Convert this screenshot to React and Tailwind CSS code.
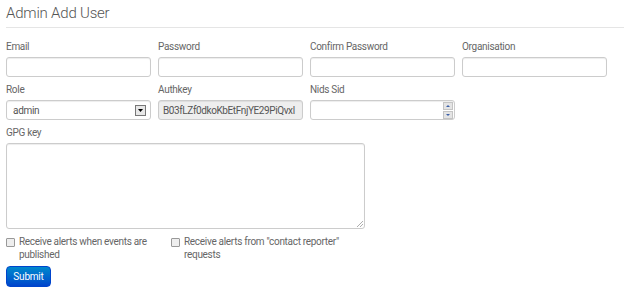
import React from 'react';

const font = { fontFamily: 'Roboto, "Open Sans", sans-serif' };

const Field = ({ label, children, className = '' }) => (
  <div className={`flex flex-col w-[145px] ${className}`}>
    <label className="h-[16px] pt-[2px] leading-[14px] mb-[3px] text-[10px] tracking-[-0.3px] text-[#666]">{label}</label>
    {children}
  </div>
);

const inputCls = 'h-[20px] w-full rounded-[3px] border border-[#cccccc] bg-white shadow-[inset_0_1px_1px_rgba(0,0,0,0.075)]';

function App() {
  return (
    <div className="w-[624px] h-[298px] bg-white overflow-hidden text-[#666]" style={font}>
      <div className="pl-[6px] pt-[3px]">
        <h1 className="text-[15px] font-light leading-[20px] text-[#555] h-[24px] tracking-[-0.2px]">Admin Add User</h1>
      </div>
      <div className="ml-[6px] border-t border-[#e5e5e5]" />

      <div className="pl-[6px] pt-[10px]">
        <div className="flex gap-[7px]">
          <Field label="Email"><div className={inputCls} /></Field>
          <Field label="Password"><div className={inputCls} /></Field>
          <Field label="Confirm Password"><div className={inputCls} /></Field>
          <Field label="Organisation"><div className={inputCls} /></Field>
        </div>

        <div className="flex gap-[7px] mt-[4px]">
          <Field label="Role">
            <div className={`${inputCls} flex items-center justify-between pl-[6px] pr-[4px]`}>
              <span className="text-[10px] tracking-[-0.3px] text-[#555]">admin</span>
              <span className="w-[11px] h-[11px] border border-[#777] bg-[#e8e8e8] flex items-center justify-center">
                <svg width="5" height="3" viewBox="0 0 5 3"><path d="M0 0h5L2.5 3z" fill="#000" /></svg>
              </span>
            </div>
          </Field>
          <Field label="Authkey">
            <div className={`${inputCls} !bg-[#eeeeee] flex items-center px-[4px] overflow-hidden`}>
              <span className="text-[10px] tracking-[-0.4px] text-[#555] whitespace-nowrap">B03fLZf0dkoKbEtFnjYE29PiQvxl</span>
            </div>
          </Field>
          <Field label="Nids Sid">
            <div className={`${inputCls} flex items-center justify-end pr-[1px]`}>
              <div className="flex flex-col gap-[1px]">
                <span className="w-[10px] h-[8px] bg-[#e4e4e4] border border-[#c4c4c4] flex items-center justify-center">
                  <svg width="4" height="2" viewBox="0 0 4 2"><path d="M0 2h4L2 0z" fill="#3a5fa8" /></svg>
                </span>
                <span className="w-[10px] h-[8px] bg-[#e4e4e4] border border-[#c4c4c4] flex items-center justify-center">
                  <svg width="4" height="2" viewBox="0 0 4 2"><path d="M0 0h4L2 2z" fill="#3a5fa8" /></svg>
                </span>
              </div>
            </div>
          </Field>
        </div>

        <div className="flex flex-col mt-[4px]">
          <label className="h-[16px] pt-[2px] leading-[14px] mb-[3px] text-[10px] tracking-[-0.3px] text-[#666]">GPG key</label>
          <div className="relative w-[359px] h-[86px] rounded-[3px] border border-[#cccccc] bg-white shadow-[inset_0_1px_1px_rgba(0,0,0,0.075)]">
            <svg className="absolute right-[1px] bottom-[1px]" width="6" height="6" viewBox="0 0 6 6">
              <path d="M6 0L0 6M6 3L3 6" stroke="#999" strokeWidth="0.8" />
            </svg>
          </div>
        </div>

        <div className="flex mt-[6px] text-[10px] leading-[13px] tracking-[-0.3px] text-[#666]">
          <div className="flex w-[165px]">
            <span className="mt-[3px] w-[9px] h-[9px] border border-[#999] bg-[#eee] rounded-[1px] shrink-0" />
            <div className="ml-[4px]">
              <div>Receive alerts when events are</div>
              <div>published</div>
            </div>
          </div>
          <div className="flex">
            <span className="mt-[3px] w-[9px] h-[9px] border border-[#999] bg-[#eee] rounded-[1px] shrink-0" />
            <div className="ml-[4px]">
              <div>Receive alerts from "contact reporter"</div>
              <div>requests</div>
            </div>
          </div>
        </div>

        <button className="mt-[5px] h-[21px] w-[45px] rounded-[4px] border border-[#0044cc] bg-gradient-to-b from-[#0088cc] to-[#0044cc] text-white text-[10px] tracking-[-0.2px] leading-none">
          Submit
        </button>
      </div>
    </div>
  );
}

export default App;
